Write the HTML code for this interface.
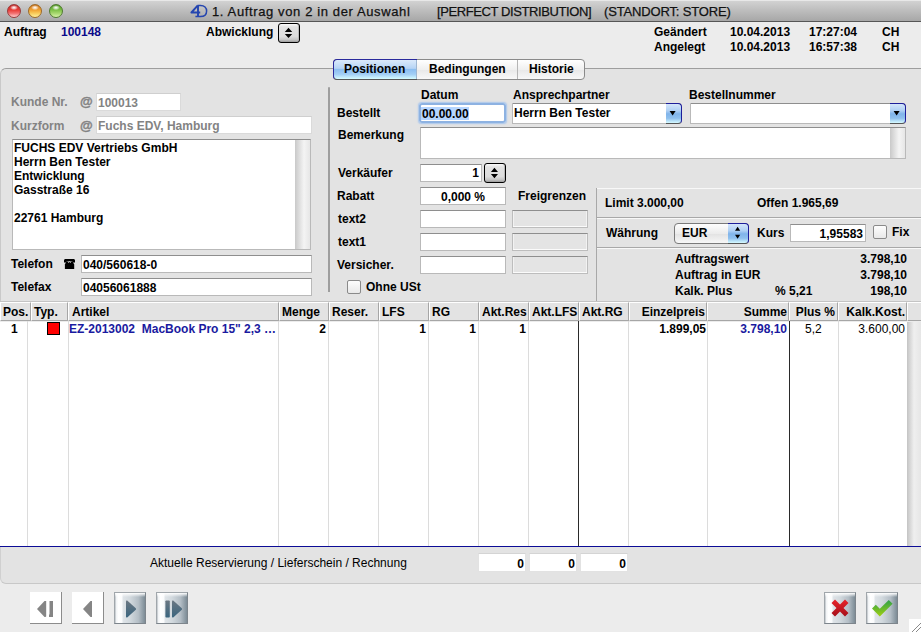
<!DOCTYPE html>
<html><head><meta charset="utf-8">
<style>
*{margin:0;padding:0;box-sizing:border-box}
html,body{width:921px;height:632px;overflow:hidden;background:#ececec}
body{position:relative;font-family:"Liberation Sans",sans-serif;font-size:12px;color:#000}
.a{position:absolute}
.t{position:absolute;font-weight:bold;font-size:12px;line-height:14px;white-space:nowrap}
.g{color:#838383}
.r{text-align:right}
.c{text-align:center}
.fld{position:absolute;background:#fff;border:1px solid #b9b9b9;border-top-color:#8e8e8e}
.fldg{position:absolute;background:#fff;border:1px solid #dadada;border-top-color:#cfcfcf}
.dis{position:absolute;background:#e4e4e4;border:1px solid #bdbdbd;border-top-color:#8e8e8e;box-shadow:inset 0 -1px 0 #fbfbfb,inset 1px 0 0 #f2f2f2,inset -1px 0 0 #f2f2f2}
.vl{position:absolute;width:1px;background:#dcdcdc}
.hc{position:absolute;top:302px;height:19px;background:#e3e3e3;border-top:1px solid #fff;border-left:1px solid #fff;border-right:1px solid #a6a6a6;border-bottom:1px solid #a6a6a6}
.nb{width:32px;height:32px;border:1px solid #7d858c;border-top-color:#a0a6ab;border-left-color:#a0a6ab;background:linear-gradient(#ffffff,rgba(255,255,255,0) 4px),linear-gradient(90deg,#b9bfc4 0,#f2f4f6 5%,#ffffff 12%,#fafbfc 23%,#dfe4e8 27%,#d2d9de 50%,#b4bec6 78%,#7d8c96 100%)}
.bb{background:linear-gradient(#d4e6fb,#b0d0f4 35%,#80b4ea 52%,#8fc0ee 75%,#d6faff 100%);border-top:1px solid #1e1e9a;border-right:1px solid #1e1e9a;border-bottom:1px solid #555;border-radius:0 4px 4px 0}
.stp{border:1px solid #000;border-radius:3px;background:linear-gradient(#fafafa,#e2e2e2 3px,#dcdcdc 70%,#c4c4c4 88%,#9a9a9a);box-shadow:inset -1px 0 0 #b8b8b8}
.hc span{position:absolute;top:2px;font-weight:bold;font-size:12px;line-height:14px;white-space:nowrap}
</style></head><body>

<!-- title bar -->
<div class="a" style="left:0;top:0;width:921px;height:22px;background:linear-gradient(#e8e8e8 0,#e8e8e8 1px,#d2d2d2 1px,#bdbdbd 50%,#a7a7a7 100%);border-bottom:1px solid #565656"></div>
<div class="a" style="left:7px;top:4px;width:14px;height:14px;border-radius:50%;border:1px solid #9a3a3a;background:radial-gradient(ellipse 4px 2.5px at 50% 22%,#fff 0,rgba(255,255,255,.6) 50%,rgba(255,255,255,0) 100%),linear-gradient(#c22a2a,#e83a34 40%,#f27272 70%,#fcc0c0 95%)"></div>
<div class="a" style="left:28px;top:4px;width:14px;height:14px;border-radius:50%;border:1px solid #9d6a28;background:radial-gradient(ellipse 4px 2.5px at 50% 22%,#fff 0,rgba(255,255,255,.6) 50%,rgba(255,255,255,0) 100%),linear-gradient(#c9701a,#f0a030 40%,#f8cc5c 70%,#fdea90 95%)"></div>
<div class="a" style="left:49px;top:4px;width:14px;height:14px;border-radius:50%;border:1px solid #4f7a30;background:radial-gradient(ellipse 4px 2.5px at 50% 22%,#fff 0,rgba(255,255,255,.6) 50%,rgba(255,255,255,0) 100%),linear-gradient(#4f9420,#7cc046 40%,#a8d870 70%,#d0eea0 95%)"></div>
<svg class="a" style="left:185px;top:0" width="30" height="22"><g fill="none" stroke="#2546b0" stroke-linejoin="round"><path d="M12.6 5.6L6.4 12.5L15.2 12.5" stroke-width="1.9"/><path d="M13 5.6L13 16.4" stroke-width="1.9"/><path d="M10.4 16.6L15.4 16.6C19.4 16.6 21.6 14.2 21.6 11C21.6 7.6 19.4 5.4 15.6 5.4L12.4 5.4" stroke-width="1.5"/></g></svg>
<div class="a" style="left:212px;top:4px;font-size:13px;line-height:15px;color:#111;-webkit-text-stroke:.25px #111;white-space:nowrap;letter-spacing:.62px">1. Auftrag von 2 in der Auswahl</div>
<div class="a" style="left:437px;top:4px;font-size:13px;line-height:15px;color:#111;-webkit-text-stroke:.25px #111;white-space:nowrap;letter-spacing:-.4px">[PERFECT DISTRIBUTION]</div>
<div class="a" style="left:604px;top:4px;font-size:13px;line-height:15px;color:#111;-webkit-text-stroke:.25px #111;white-space:nowrap;letter-spacing:-.15px">(STANDORT: STORE)</div>

<!-- top header -->
<div class="t" style="left:4px;top:25px">Auftrag</div>
<div class="t" style="left:61px;top:25px;color:#0a0a8a">100148</div>
<div class="t" style="left:206px;top:25px">Abwicklung</div>
<div class="a stp" style="left:278px;top:23px;width:22px;height:20px"></div>
<svg class="a" style="left:278px;top:23px" width="22" height="20"><path d="M6.8 8.9L10.5 4.8L14.2 8.9Z M6.8 11L10.5 15.1L14.2 11Z" fill="#000"/></svg>

<div class="t" style="left:654px;top:25px">Geändert</div>
<div class="t" style="left:730px;top:25px">10.04.2013</div>
<div class="t" style="left:809px;top:25px">17:27:04</div>
<div class="t" style="left:882px;top:25px">CH</div>
<div class="t" style="left:654px;top:40px">Angelegt</div>
<div class="t" style="left:730px;top:40px">10.04.2013</div>
<div class="t" style="left:809px;top:40px">16:57:38</div>
<div class="t" style="left:882px;top:40px">CH</div>

<!-- main box -->
<div class="a" style="left:0;top:68px;width:930px;height:234px;background:#e3e3e3;border-top:1px solid #9e9e9e;border-left:1px solid #c9c9c9;border-radius:6px 0 0 0"></div>

<!-- tabs -->
<div class="a" style="left:333px;top:59px;width:252px;height:21px;border:1px solid #8a8a8a;border-radius:4px;background:linear-gradient(#ffffff,#f0f0f0 50%,#e8e8e8 51%,#f8f8f8);overflow:hidden">
  <div class="a" style="left:0;top:0;width:83px;height:19px;background:linear-gradient(#dbeafb,#b6d4f5 44%,#8cbef0 49%,#a2cef5 75%,#d6fcff 100%);border-right:1px solid #9fb6d0"></div>
  <div class="a" style="left:183px;top:0;width:1px;height:19px;background:#b5b5b5"></div>
</div>
<div class="a" style="left:333px;top:59px;width:84px;height:21px;border:1px solid #2a2a9c;border-bottom-color:#555;border-radius:4px 0 0 4px;border-right:none"></div>
<div class="t" style="left:344px;top:62px">Positionen</div>
<div class="t" style="left:429px;top:62px">Bedingungen</div>
<div class="t" style="left:529px;top:62px">Historie</div>

<!-- left panel -->
<div class="t g" style="left:11px;top:95px">Kunde Nr.</div>
<div class="t g" style="left:80px;top:95px;font-size:13px;-webkit-text-stroke:.4px #838383">@</div>
<div class="fldg" style="left:96px;top:93px;width:85px;height:18px"></div>
<div class="t g" style="left:98px;top:96px">100013</div>
<div class="t g" style="left:11px;top:119px">Kurzform</div>
<div class="t g" style="left:80px;top:119px;font-size:13px;-webkit-text-stroke:.4px #838383">@</div>
<div class="fldg" style="left:96px;top:116px;width:216px;height:18px"></div>
<div class="t g" style="left:98px;top:119px">Fuchs EDV, Hamburg</div>

<div class="fld" style="left:12px;top:139px;width:299px;height:111px"></div>
<div class="a" style="left:295px;top:140px;width:15px;height:109px;background:linear-gradient(90deg,#c9c9c9,#f4f4f4 60%,#e6e6e6)"></div>
<div class="t" style="left:14px;top:141px">FUCHS EDV Vertriebs GmbH</div>
<div class="t" style="left:14px;top:155px">Herrn Ben Tester</div>
<div class="t" style="left:14px;top:169px">Entwicklung</div>
<div class="t" style="left:14px;top:183px">Gasstraße 16</div>
<div class="t" style="left:14px;top:211px">22761 Hamburg</div>

<div class="t" style="left:11px;top:257px">Telefon</div>
<svg class="a" style="left:63px;top:258px" width="13" height="12"><path d="M1 4.6V2.6C1 1.6 1.6 1 2.6 1H10.4C11.4 1 12 1.6 12 2.6V4.6H9.6L9.2 3.2H3.8L3.4 4.6Z" fill="#000"/><path d="M3.4 3.6H9.6L11.2 6.6V11H1.9V6.6Z" fill="#000"/><path d="M5 4.4Q6.5 3 8 4.4" stroke="#e3e3e3" stroke-width="1" fill="none"/></svg>
<div class="fld" style="left:81px;top:255px;width:231px;height:18px"></div>
<div class="t" style="left:83px;top:258px">040/560618-0</div>
<div class="t" style="left:11px;top:280px">Telefax</div>
<div class="fld" style="left:81px;top:278px;width:231px;height:18px"></div>
<div class="t" style="left:83px;top:281px">04056061888</div>

<div class="a" style="left:328px;top:87px;width:2px;height:205px;background:#9e9e9e;border-radius:1px 1px 0 0"></div>

<!-- right panel -->
<div class="t" style="left:421px;top:88px">Datum</div>
<div class="t" style="left:513px;top:88px">Ansprechpartner</div>
<div class="t" style="left:689px;top:88px">Bestellnummer</div>
<div class="t" style="left:337px;top:106px">Bestellt</div>
<div class="a" style="left:419px;top:103px;width:87px;height:20px;border-radius:3px;background:#fff;box-shadow:inset 0 0 0 2px #8db2e2,0 0 1.5px .5px #a9c6ec"></div>
<div class="a" style="left:421px;top:107px;width:48px;height:13px;background:#b5d5ff"></div>
<div class="t" style="left:422px;top:107px">00.00.00</div>

<div class="fld" style="left:512px;top:103px;width:170px;height:21px;border-radius:0 4px 4px 0"></div>
<div class="a bb" style="left:666px;top:103px;width:16px;height:21px"></div>
<svg class="a" style="left:666px;top:103px" width="16" height="21"><path d="M3.6 8L9.6 8L6.6 12.4Z" fill="#000"/></svg>
<div class="t" style="left:514px;top:106px">Herrn Ben Tester</div>

<div class="fld" style="left:690px;top:103px;width:216px;height:21px;border-radius:0 4px 4px 0"></div>
<div class="a bb" style="left:890px;top:103px;width:16px;height:21px"></div>
<svg class="a" style="left:890px;top:103px" width="16" height="21"><path d="M3.6 8L9.6 8L6.6 12.4Z" fill="#000"/></svg>

<div class="t" style="left:338px;top:128px">Bemerkung</div>
<div class="fld" style="left:420px;top:127px;width:486px;height:32px"></div>
<div class="a" style="left:890px;top:128px;width:15px;height:30px;background:linear-gradient(90deg,#c9c9c9,#f4f4f4 60%,#e6e6e6)"></div>

<div class="t" style="left:338px;top:166px">Verkäufer</div>
<div class="fld" style="left:420px;top:164px;width:62px;height:18px"></div>
<div class="t r" style="left:420px;top:166px;width:59px">1</div>
<div class="a stp" style="left:484px;top:163px;width:22px;height:20px"></div>
<svg class="a" style="left:484px;top:163px" width="22" height="20"><path d="M6.9 9L10.45 4.7L14 9Z M6.9 10.9L10.45 15.2L14 10.9Z" fill="#000"/></svg>

<div class="t" style="left:337px;top:189px">Rabatt</div>
<div class="fld" style="left:420px;top:187px;width:86px;height:18px"></div>
<div class="t c" style="left:420px;top:190px;width:86px">0,000 %</div>
<div class="t" style="left:518px;top:189px">Freigrenzen</div>

<div class="t" style="left:338px;top:212px">text2</div>
<div class="fld" style="left:420px;top:210px;width:86px;height:18px"></div>
<div class="dis" style="left:512px;top:210px;width:76px;height:18px"></div>
<div class="t" style="left:338px;top:235px">text1</div>
<div class="fld" style="left:420px;top:233px;width:86px;height:18px"></div>
<div class="dis" style="left:512px;top:233px;width:76px;height:18px"></div>
<div class="t" style="left:337px;top:258px">Versicher.</div>
<div class="fld" style="left:420px;top:256px;width:86px;height:18px"></div>
<div class="dis" style="left:512px;top:256px;width:76px;height:18px"></div>

<div class="a" style="left:347px;top:280px;width:14px;height:14px;border:1px solid #8a8a8a;border-radius:2px;background:linear-gradient(#fdfdfd,#e9e9e9)"></div>
<div class="t" style="left:366px;top:280px">Ohne USt</div>

<!-- right box -->
<div class="a" style="left:596px;top:188px;width:330px;height:114px;border-top:1px solid #fff;border-left:1px solid #fff;background:#e3e3e3"></div>
<div class="a" style="left:596px;top:188px;width:1px;height:114px;background:#a8a8a8"></div>
<div class="a" style="left:597px;top:188px;width:324px;height:1px;background:#f8f8f8"></div>
<div class="a" style="left:597px;top:217px;width:324px;height:1px;background:#a8a8a8"></div>
<div class="a" style="left:597px;top:218px;width:324px;height:1px;background:#f8f8f8"></div>
<div class="a" style="left:597px;top:247px;width:324px;height:1px;background:#a8a8a8"></div>
<div class="a" style="left:597px;top:248px;width:324px;height:1px;background:#f8f8f8"></div>

<div class="t" style="left:605px;top:196px">Limit 3.000,00</div>
<div class="t" style="left:757px;top:196px">Offen 1.965,69</div>
<div class="t" style="left:606px;top:226px">Währung</div>
<div class="a" style="left:674px;top:223px;width:75px;height:21px;border:1px solid #7a7a7a;border-radius:4px;background:linear-gradient(#fdfdfd,#ececec 50%,#e2e2e2 51%,#f7f7f7);overflow:hidden">
  </div>
<div class="a bb" style="left:728px;top:223px;width:21px;height:21px"></div>
<svg class="a" style="left:728px;top:223px" width="21" height="21"><path d="M7 7.8L9.6 3.8L12.2 7.8Z M7 11.8L9.6 15.8L12.2 11.8Z" fill="#000"/></svg>
<div class="t" style="left:682px;top:226px">EUR</div>
<div class="t" style="left:757px;top:226px">Kurs</div>
<div class="fld" style="left:790px;top:224px;width:76px;height:18px"></div>
<div class="t r" style="left:790px;top:227px;width:73px">1,95583</div>
<div class="a" style="left:873px;top:225px;width:14px;height:14px;border:1px solid #8a8a8a;border-radius:2px;background:linear-gradient(#fdfdfd,#e9e9e9)"></div>
<div class="t" style="left:892px;top:225px">Fix</div>

<div class="t" style="left:675px;top:252px">Auftragswert</div>
<div class="t r" style="left:800px;top:252px;width:107px">3.798,10</div>
<div class="t" style="left:675px;top:268px">Auftrag in EUR</div>
<div class="t r" style="left:800px;top:268px;width:107px">3.798,10</div>
<div class="t" style="left:675px;top:284px">Kalk. Plus</div>
<div class="t" style="left:775px;top:284px">% 5,21</div>
<div class="t r" style="left:800px;top:284px;width:107px">198,10</div>

<!-- table -->
<div class="a" style="left:0;top:301px;width:921px;height:1px;background:#c4c4c4"></div>
<div class="a" style="left:0;top:322px;width:907px;height:225px;background:#fff"></div>
<div class="a" style="left:907px;top:322px;width:14px;height:225px;background:linear-gradient(90deg,#c4c4c4,#efefef 50%,#e6e6e6)"></div>
<div class="a" style="left:0;top:546px;width:921px;height:1px;background:#0c0c96;box-shadow:0 .5px 0 #6a6ab8"></div>

<div class="hc" style="left:0;width:31px"><span style="left:2px">Pos.</span></div>
<div class="hc" style="left:31px;width:37px"><span style="left:2px">Typ.</span></div>
<div class="hc" style="left:68px;width:211px"><span style="left:3px">Artikel</span></div>
<div class="hc" style="left:279px;width:50px"><span style="left:2px">Menge</span></div>
<div class="hc" style="left:329px;width:50px"><span style="left:2px">Reser.</span></div>
<div class="hc" style="left:379px;width:50px"><span style="left:2px">LFS</span></div>
<div class="hc" style="left:429px;width:50px"><span style="left:2px">RG</span></div>
<div class="hc" style="left:479px;width:50px"><span style="left:2px">Akt.Res</span></div>
<div class="hc" style="left:529px;width:50px"><span style="left:2px">Akt.LFS</span></div>
<div class="hc" style="left:579px;width:50px"><span style="left:2px">Akt.RG</span></div>
<div class="hc" style="left:629px;width:78px"><span style="right:1px">Einzelpreis</span></div>
<div class="hc" style="left:707px;width:82px"><span style="right:1px">Summe</span></div>
<div class="hc" style="left:789px;width:49px"><span style="right:2px">Plus %</span></div>
<div class="hc" style="left:838px;width:69px"><span style="right:1px">Kalk.Kost.</span></div>
<div class="hc" style="left:907px;width:20px"></div>

<div class="vl" style="left:27px;top:321px;height:225px"></div>
<div class="vl" style="left:68px;top:321px;height:225px"></div>
<div class="vl" style="left:278px;top:321px;height:225px"></div>
<div class="vl" style="left:328px;top:321px;height:225px"></div>
<div class="vl" style="left:378px;top:321px;height:225px"></div>
<div class="vl" style="left:428px;top:321px;height:225px"></div>
<div class="vl" style="left:478px;top:321px;height:225px"></div>
<div class="vl" style="left:528px;top:321px;height:225px"></div>
<div class="vl" style="left:578px;top:321px;height:225px;background:#2a2a2a"></div>
<div class="vl" style="left:628px;top:321px;height:225px"></div>
<div class="vl" style="left:707px;top:321px;height:225px"></div>
<div class="vl" style="left:789px;top:321px;height:225px;background:#2a2a2a"></div>
<div class="vl" style="left:838px;top:321px;height:225px"></div>

<div class="t" style="left:11px;top:322px">1</div>
<div class="a" style="left:47px;top:322px;width:13px;height:13px;background:#f00;border:1px solid #000"></div>
<div class="t" style="left:69px;top:322px;color:#1a1aa0">EZ-2013002&nbsp; MacBook Pro 15" 2,3 …</div>
<div class="t r" style="left:279px;top:322px;width:47px">2</div>
<div class="t r" style="left:379px;top:322px;width:47px">1</div>
<div class="t r" style="left:429px;top:322px;width:47px">1</div>
<div class="t r" style="left:479px;top:322px;width:47px">1</div>
<div class="t r" style="left:629px;top:322px;width:77px">1.899,05</div>
<div class="t r" style="left:707px;top:322px;width:80px;color:#1a1aa0">3.798,10</div>
<div class="t" style="left:805px;top:322px;font-weight:normal">5,2</div>
<div class="t r" style="left:839px;top:322px;width:66px;font-weight:normal">3.600,00</div>

<!-- footer -->
<div class="a" style="left:0;top:547px;width:921px;height:37px;background:#e3e3e3;border-bottom:1px solid #c8c8c8;border-left:1px solid #d0d0d0;border-radius:0 0 0 6px"></div>
<div class="a" style="left:150px;top:556px;font-size:12px;line-height:14px;white-space:nowrap">Aktuelle Reservierung / Lieferschein / Rechnung</div>
<div class="fldg" style="left:478px;top:553px;width:48px;height:19px;border-color:#e2e2e2;border-top-color:#d4d4d4"></div>
<div class="t r" style="left:478px;top:557px;width:46px">0</div>
<div class="fldg" style="left:529px;top:553px;width:48px;height:19px;border-color:#e2e2e2;border-top-color:#d4d4d4"></div>
<div class="t r" style="left:529px;top:557px;width:46px">0</div>
<div class="fldg" style="left:580px;top:553px;width:48px;height:19px;border-color:#e2e2e2;border-top-color:#d4d4d4"></div>
<div class="t r" style="left:580px;top:557px;width:46px">0</div>

<!-- nav buttons -->
<div class="a" style="left:30px;top:592px;width:32px;height:32px;background:#fff;border-right:1px solid #8c8c8c;border-bottom:1px solid #8c8c8c"></div>
<svg class="a" style="left:30px;top:592px" width="32" height="32"><path d="M7 17L14.5 9H16.2V24.5L15.4 25H14.5Z" fill="#858585"/><path d="M19.5 9H23V25H19V22.5H19.5Z" fill="#858585"/></svg>
<div class="a" style="left:72px;top:592px;width:32px;height:32px;background:#fff;border-right:1px solid #8c8c8c;border-bottom:1px solid #8c8c8c"></div>
<svg class="a" style="left:72px;top:592px" width="32" height="32"><path d="M11 17L18.5 9H20V25H18.5Z" fill="#858585"/></svg>
<div class="a nb" style="left:114px;top:592px"></div>
<svg class="a" style="left:114px;top:592px" width="32" height="32"><defs><linearGradient id="sl" x1="0" y1="0" x2="0" y2="1"><stop offset="0" stop-color="#6b7782"/><stop offset="1" stop-color="#3a657f"/></linearGradient></defs><path d="M12 9.5Q12 8 13.2 8.6L21.8 16.2Q22.4 17 21.8 17.8L13.2 25.4Q12 26 12 24.5Z" fill="url(#sl)"/></svg>
<div class="a nb" style="left:156px;top:592px"></div>
<svg class="a" style="left:156px;top:592px" width="32" height="32"><rect x="9.4" y="8.5" width="4.4" height="17" rx=".8" fill="url(#sl)"/><path d="M16 9.5Q16 8 17.2 8.6L25.8 16.2Q26.4 17 25.8 17.8L17.2 25.4Q16 26 16 24.5Z" fill="url(#sl)"/></svg>

<!-- cancel/ok -->
<div class="a nb" style="left:824px;top:592px"></div>
<svg class="a" style="left:824px;top:592px" width="32" height="32"><defs><linearGradient id="rg" x1="0" y1="0" x2="0" y2="1"><stop offset="0" stop-color="#e8242a"/><stop offset="1" stop-color="#a50f1a"/></linearGradient></defs><path d="M7.5 11L11 7.6L16 12.6L21 7.6L24.5 11L19.5 16L24.5 21L21 24.4L16 19.4L11 24.4L7.5 21L12.5 16Z" fill="url(#rg)"/></svg>
<div class="a nb" style="left:866px;top:592px"></div>
<svg class="a" style="left:866px;top:592px" width="32" height="32"><defs><linearGradient id="gg" x1="0" y1="0" x2="0" y2="1"><stop offset="0" stop-color="#2ea04a"/><stop offset="1" stop-color="#a0d010"/></linearGradient></defs><path d="M6 16.5L9.8 12.8L13.8 16.8L22.8 8L26.6 11.8L13.8 24.6Z" fill="url(#gg)"/></svg>

<!-- resize grip -->
<div class="a" style="left:909px;top:619px;width:12px;height:13px;background:#fff"></div>
<svg class="a" style="left:909px;top:619px" width="12" height="13"><path d="M3 13L12 4M7 13L12 8" stroke="#8a8a8a" stroke-width="1"/></svg>

</body></html>
